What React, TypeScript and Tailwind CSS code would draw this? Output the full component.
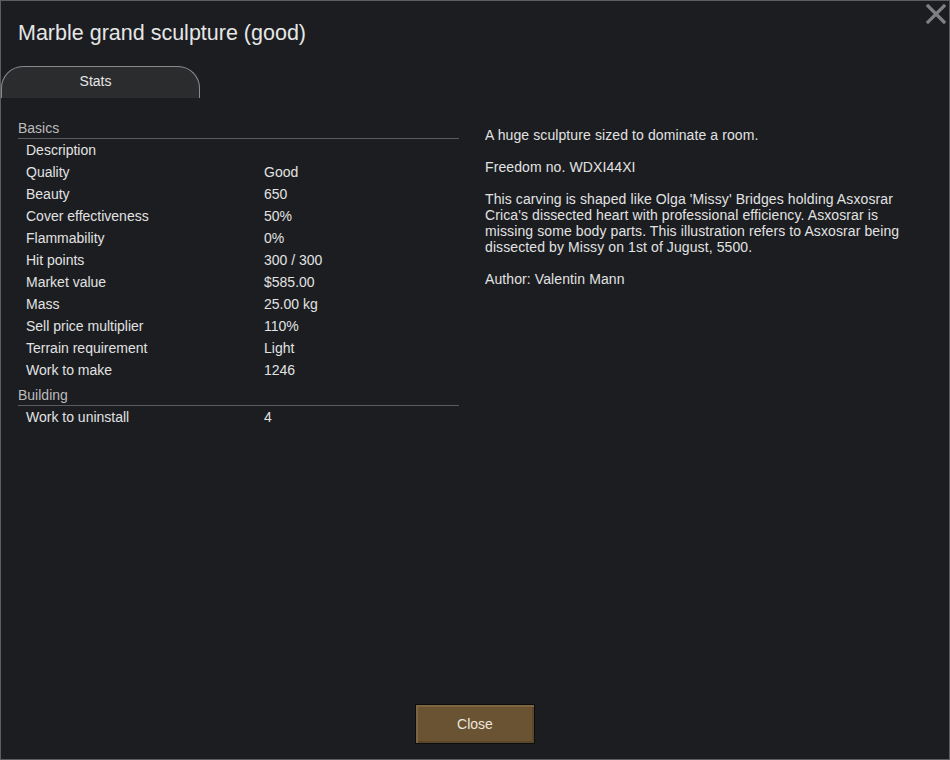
import React from "react";

const basics: [string, string][] = [
  ["Description", ""],
  ["Quality", "Good"],
  ["Beauty", "650"],
  ["Cover effectiveness", "50%"],
  ["Flammability", "0%"],
  ["Hit points", "300 / 300"],
  ["Market value", "$585.00"],
  ["Mass", "25.00 kg"],
  ["Sell price multiplier", "110%"],
  ["Terrain requirement", "Light"],
  ["Work to make", "1246"],
];

function Header({ label, extra }: { label: string; extra?: string }) {
  return (
    <div
      className={
        "flex items-end pb-[2px] border-b border-[#5a5b5d] text-[14px] leading-[16px] text-[#bcbcbc] " +
        (extra === "tall" ? "h-[25px]" : "h-[24px]")
      }
    >
      {label}
    </div>
  );
}

function Row({ k, v }: { k: string; v: string }) {
  return (
    <div className="h-[22px] flex items-center pt-[1px] text-[14px] text-[#e2e2e2]">
      <div className="w-[246px] pl-[8px]">{k}</div>
      <div>{v}</div>
    </div>
  );
}

export default function App() {
  return (
    <div
      className="w-[950px] h-[760px] bg-[#1b1d21] border border-[#5c5d60] flex flex-col relative overflow-hidden"
      style={{ fontFamily: '"Liberation Sans", Arial, sans-serif' }}
    >
      <button className="absolute right-[3px] top-[3px] w-[20px] h-[20px] flex items-center justify-center">
        <svg width="20" height="20" viewBox="0 0 20 20">
          <path d="M2 2 L18 18 M18 2 L2 18" stroke="#7f8082" strokeWidth="3.2" strokeLinecap="square" />
        </svg>
      </button>
      <div className="pl-[17px] pt-[20px] h-[65px] text-[21.5px] leading-[24px] text-[#e6e6e6]">
        Marble grand sculpture (good)
      </div>
      <div className="h-[32px] flex">
        <div className="w-[199px] h-[32px] rounded-t-[22px] bg-[#2b2c2e] border-t border-l border-r border-[#8a8b8d] flex items-center justify-center text-[14px] text-[#e6e6e6] pb-[3px] pr-[10px]">
          Stats
        </div>
      </div>
      <div className="flex-1 flex">
        <div className="w-[441px] ml-[17px] pt-[17px]">
          <Header label="Basics" />
          {basics.map(([k, v]) => (
            <Row key={k} k={k} v={v} />
          ))}
          <Header label="Building" extra="tall" />
          <Row k="Work to uninstall" v="4" />
        </div>
        <div className="ml-[26px] pt-[29px] w-[425px] text-[14px] leading-[16px] tracking-[0.1px] text-[#e2e2e2] flex flex-col gap-[16px]">
          <p>A huge sculpture sized to dominate a room.</p>
          <p>Freedom no. WDXI44XI</p>
          <p>
            This carving is shaped like Olga 'Missy' Bridges holding Asxosrar Crica's dissected heart with
            professional efficiency. Asxosrar is missing some body parts. This illustration refers to Asxosrar
            being dissected by Missy on 1st of Jugust, 5500.
          </p>
          <p>Author: Valentin Mann</p>
        </div>
      </div>
      <div className="h-[55px] flex justify-center items-start">
        <button className="w-[120px] h-[40px] border border-[#0d0d0d] bg-[#6a5333] shadow-[inset_2px_2px_0_#7c6540,inset_-2px_-2px_0_#5a4629] text-[14px] text-[#ece6da]">
          Close
        </button>
      </div>
    </div>
  );
}
